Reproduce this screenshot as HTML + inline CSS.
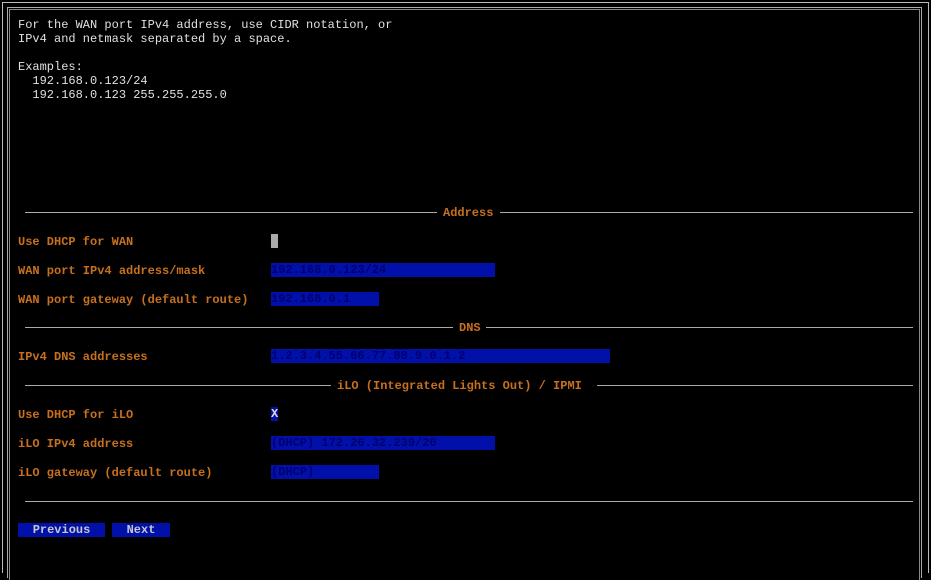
<!DOCTYPE html>
<html><head><style>
body{margin:0;width:931px;height:570px;background:#000;overflow:hidden;position:relative;font-family:"Liberation Mono",monospace;font-size:12px;font-weight:bold;}
.b1{position:absolute;left:2px;top:2px;width:925px;height:570px;border-left:1px solid #bbb;border-top:1px solid #bbb;border-right:1px solid #bbb;}
.b2{position:absolute;left:7px;top:7px;width:913px;height:570px;border-left:1px solid #aaa;border-top:1px solid #aaa;border-right:1px solid #aaa;}
.b3{position:absolute;left:9px;top:9px;width:909px;height:570px;border-left:1px solid #888;border-top:1px solid #888;border-right:1px solid #888;}
.t{position:absolute;white-space:pre;line-height:14px;}
.w{color:#e0e0e0;font-weight:normal;}
.o{color:#c8701e;}
.f{background:#0010a8;color:#000070;height:14px;}
.hr{position:absolute;height:1px;background:#aaa;}
.btn{background:#0010a8;color:#c8c8c8;text-align:center;height:14px;}
</style></head><body>
<div class="b1"></div><div class="b2"></div><div class="b3"></div>
<div class="t w" style="left:18px;top:18px">For the WAN port IPv4 address, use CIDR notation, or
IPv4 and netmask separated by a space.

Examples:
  192.168.0.123/24
  192.168.0.123 255.255.255.0</div>

<div class="hr" style="left:25px;top:212px;width:412px"></div>
<div class="t o" style="left:443px;top:206px">Address</div>
<div class="hr" style="left:500px;top:212px;width:413px"></div>

<div class="t o" style="left:18px;top:235px">Use DHCP for WAN</div>
<div class="t" style="left:271px;top:234px;width:7px;height:14px;background:#aaa"></div>
<div class="t o" style="left:18px;top:264px">WAN port IPv4 address/mask</div>
<div class="t f" style="left:271px;top:263px;width:224px">192.168.0.123/24</div>
<div class="t o" style="left:18px;top:293px">WAN port gateway (default route)</div>
<div class="t f" style="left:271px;top:292px;width:108px">192.168.0.1</div>

<div class="hr" style="left:25px;top:327px;width:428px"></div>
<div class="t o" style="left:459px;top:321px">DNS</div>
<div class="hr" style="left:486px;top:327px;width:427px"></div>

<div class="t o" style="left:18px;top:350px">IPv4 DNS addresses</div>
<div class="t f" style="left:271px;top:349px;width:339px">1.2.3.4.55.66.77.88.9.0.1.2</div>

<div class="hr" style="left:25px;top:385px;width:306px"></div>
<div class="t o" style="left:337px;top:379px">iLO (Integrated Lights Out) / IPMI</div>
<div class="hr" style="left:597px;top:385px;width:316px"></div>

<div class="t o" style="left:18px;top:408px">Use DHCP for iLO</div>
<div class="t f" style="left:271px;top:407px;width:7px;color:#ddd">X</div>
<div class="t o" style="left:18px;top:437px">iLO IPv4 address</div>
<div class="t f" style="left:271px;top:436px;width:224px">(DHCP) 172.26.32.239/20</div>
<div class="t o" style="left:18px;top:466px">iLO gateway (default route)</div>
<div class="t f" style="left:271px;top:465px;width:108px">(DHCP)</div>

<div class="hr" style="left:25px;top:501px;width:888px"></div>

<div class="t btn" style="left:18px;top:523px;width:87px">Previous</div>
<div class="t btn" style="left:112px;top:523px;width:58px">Next</div>
</body></html>
